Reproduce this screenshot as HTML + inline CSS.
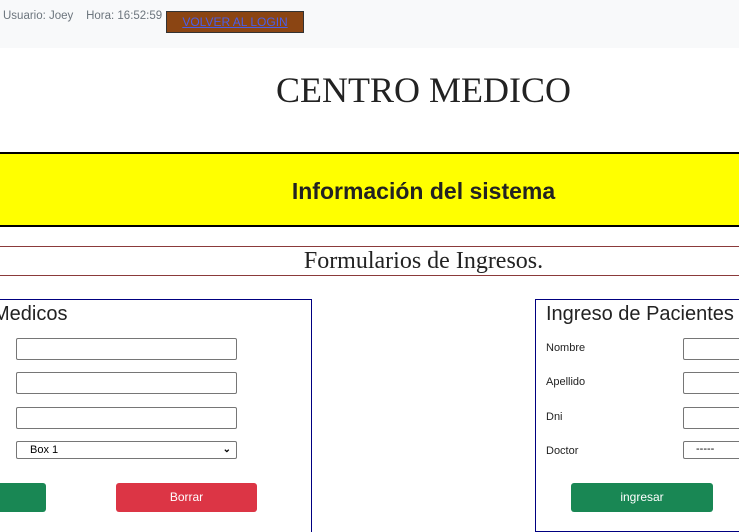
<!DOCTYPE html>
<html><head><meta charset="utf-8"><style>
*{box-sizing:border-box}
html,body{margin:0;width:739px;height:532px;overflow:hidden}
body{background:#fff;position:relative;font-family:"Liberation Sans",sans-serif}
.a{position:absolute}
.top{left:0;top:0;width:739px;height:48px;background:#f8f9fa}
.inp{position:absolute;height:22px;border:1px solid #767676;border-radius:2px;background:#fff}
.lbl{position:absolute;font-size:11px;color:#222}
.btn{position:absolute;height:29px;border-radius:3px;color:#fff;font-size:12px;text-align:center;line-height:29px}
</style></head><body>
<div class="a top"></div>
<div class="a" style="left:3px;top:10px;font-size:11.5px;color:#6c757d">Usuario: Joey &nbsp;&nbsp; Hora: 16:52:59</div>
<div class="a" style="left:166px;top:11px;width:138px;height:22px;background:#8b4513;border:1px solid #333;text-align:center;line-height:21px;font-size:12px"><span style="color:#4a5ee8;text-decoration:underline">VOLVER AL LOGIN</span></div>
<div class="a" style="left:0;width:847px;top:69px;text-align:center;font-family:'Liberation Serif',serif;font-size:36px;color:#222">CENTRO MEDICO</div>
<div class="a" style="left:0;top:152px;width:739px;height:75px;background:#ffff00;border-top:2px solid #000;border-bottom:2px solid #000"></div>
<div class="a" style="left:0;width:847px;top:178px;text-align:center;font-size:23px;color:#222;font-weight:bold">Información del sistema</div>
<div class="a" style="left:0;top:246px;width:739px;height:30px;border-top:1px solid #8b3a3a;border-bottom:1px solid #8b3a3a"></div>
<div class="a" style="left:0;width:847px;top:248px;text-align:center;font-family:'Liberation Serif',serif;font-size:24px;color:#222">Formularios de Ingresos.</div>

<div class="a" style="left:-10px;top:299px;width:322px;height:236px;border:1px solid #000080"></div>
<div class="a" style="left:-7px;top:303px;font-size:20px;color:#222">Medicos</div>
<div class="inp" style="left:16px;top:338px;width:221px"></div>
<div class="inp" style="left:16px;top:372px;width:221px"></div>
<div class="inp" style="left:16px;top:407px;width:221px"></div>
<div class="inp" style="left:16px;top:441px;width:221px;height:18px;font-size:11px;line-height:16px;padding-left:13px">Box 1<span style="position:absolute;right:5px;top:0;font-size:10px;font-weight:bold">&#x2304;</span></div>
<div class="btn" style="left:-20px;top:483px;width:66px;background:#198754"></div>
<div class="btn" style="left:116px;top:483px;width:141px;background:#dc3545">Borrar</div>

<div class="a" style="left:535px;top:299px;width:220px;height:233px;border:1px solid #000080"></div>
<div class="a" style="left:546px;top:303px;font-size:20px;color:#222;white-space:nowrap">Ingreso de Pacientes</div>
<div class="lbl" style="left:546px;top:342px">Nombre</div>
<div class="lbl" style="left:546px;top:376px">Apellido</div>
<div class="lbl" style="left:546px;top:411px">Dni</div>
<div class="lbl" style="left:546px;top:445px">Doctor</div>
<div class="inp" style="left:683px;top:338px;width:80px"></div>
<div class="inp" style="left:683px;top:372px;width:80px"></div>
<div class="inp" style="left:683px;top:407px;width:80px"></div>
<div class="inp" style="left:683px;top:441px;width:80px;height:18px;font-size:11px;line-height:15px;padding-left:12px">-----</div>
<div class="btn" style="left:571px;top:483px;width:142px;background:#198754">ingresar</div>
</body></html>
